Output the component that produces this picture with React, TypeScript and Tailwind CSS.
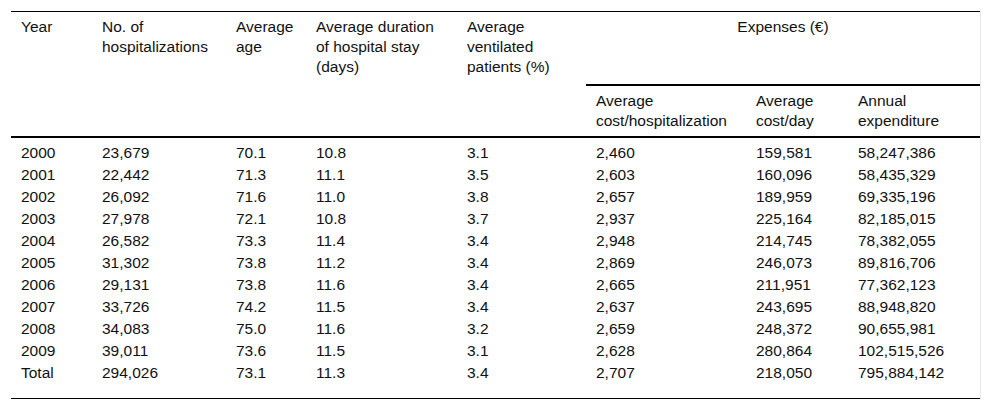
const rows: string[][] = [
    ['2000', '23,679', '70.1', '10.8', '3.1', '2,460', '159,581', '58,247,386'],
    ['2001', '22,442', '71.3', '11.1', '3.5', '2,603', '160,096', '58,435,329'],
    ['2002', '26,092', '71.6', '11.0', '3.8', '2,657', '189,959', '69,335,196'],
    ['2003', '27,978', '72.1', '10.8', '3.7', '2,937', '225,164', '82,185,015'],
    ['2004', '26,582', '73.3', '11.4', '3.4', '2,948', '214,745', '78,382,055'],
    ['2005', '31,302', '73.8', '11.2', '3.4', '2,869', '246,073', '89,816,706'],
    ['2006', '29,131', '73.8', '11.6', '3.4', '2,665', '211,951', '77,362,123'],
    ['2007', '33,726', '74.2', '11.5', '3.4', '2,637', '243,695', '88,948,820'],
    ['2008', '34,083', '75.0', '11.6', '3.2', '2,659', '248,372', '90,655,981'],
    ['2009', '39,011', '73.6', '11.5', '3.1', '2,628', '280,864', '102,515,526'],
    ['Total', '294,026', '73.1', '11.3', '3.4', '2,707', '218,050', '795,884,142'],
];

export default function App() {
    return (
        <div className="bg-white w-[992px] h-[411px] pt-[11px] pl-[11px] font-['Liberation_Sans',Arial,sans-serif] text-[15.5px] leading-[20px] text-[#111]">
            <div className="w-[970px] border-r border-[#e6e6e6]">
                <table className="w-[969px] table-fixed border-collapse border-t border-b border-black">
                    <colgroup>
                        <col className="w-[81px]" />
                        <col className="w-[134px]" />
                        <col className="w-[80px]" />
                        <col className="w-[151px]" />
                        <col className="w-[129px]" />
                        <col className="w-[160px]" />
                        <col className="w-[102px]" />
                        <col className="w-[132px]" />
                    </colgroup>
                    <thead className="border-b-2 border-black">
                        {/* ligne 1 */}
                        <tr className="h-[73px]">
                            <th rowSpan={2} className="align-top text-left font-normal px-[10px] pt-[5px]">Year</th>
                            <th rowSpan={2} className="align-top text-left font-normal px-[10px] pt-[5px]">No. of hospitalizations</th>
                            <th rowSpan={2} className="align-top text-left font-normal px-[10px] pt-[5px]">Average age</th>
                            <th rowSpan={2} className="align-top text-left font-normal px-[10px] pt-[5px]">Average duration of hospital stay (days)</th>
                            <th rowSpan={2} className="align-top text-left font-normal px-[10px] pt-[5px]">Average ventilated patients (%)</th>
                            <th colSpan={3} className="align-top text-center font-normal px-[10px] pt-[5px] border-b-2 border-black">Expenses (€)</th>
                        </tr>
                        {/* ligne 2 */}
                        <tr className="h-[52px]">
                            <th className="align-top text-left font-normal px-[10px] pt-[5px]">Average cost/hospitalization</th>
                            <th className="align-top text-left font-normal px-[10px] pt-[5px]">Average cost/day</th>
                            <th className="align-top text-left font-normal px-[10px] pt-[5px]">Annual expenditure</th>
                        </tr>
                    </thead>
                    <tbody>
                        {rows.map((r, i) => (
                            <tr key={r[0]}>
                                {r.map((c, j) => (
                                    <td
                                        key={j}
                                        className={
                                            i === 0
                                                ? 'px-[10px] pt-[5px] pb-[1px]'
                                                : i === rows.length - 1
                                                ? 'px-[10px] pt-[1px] pb-[15px]'
                                                : 'px-[10px] py-[1px]'
                                        }
                                    >
                                        {c}
                                    </td>
                                ))}
                            </tr>
                        ))}
                    </tbody>
                </table>
            </div>
        </div>
    );
}
